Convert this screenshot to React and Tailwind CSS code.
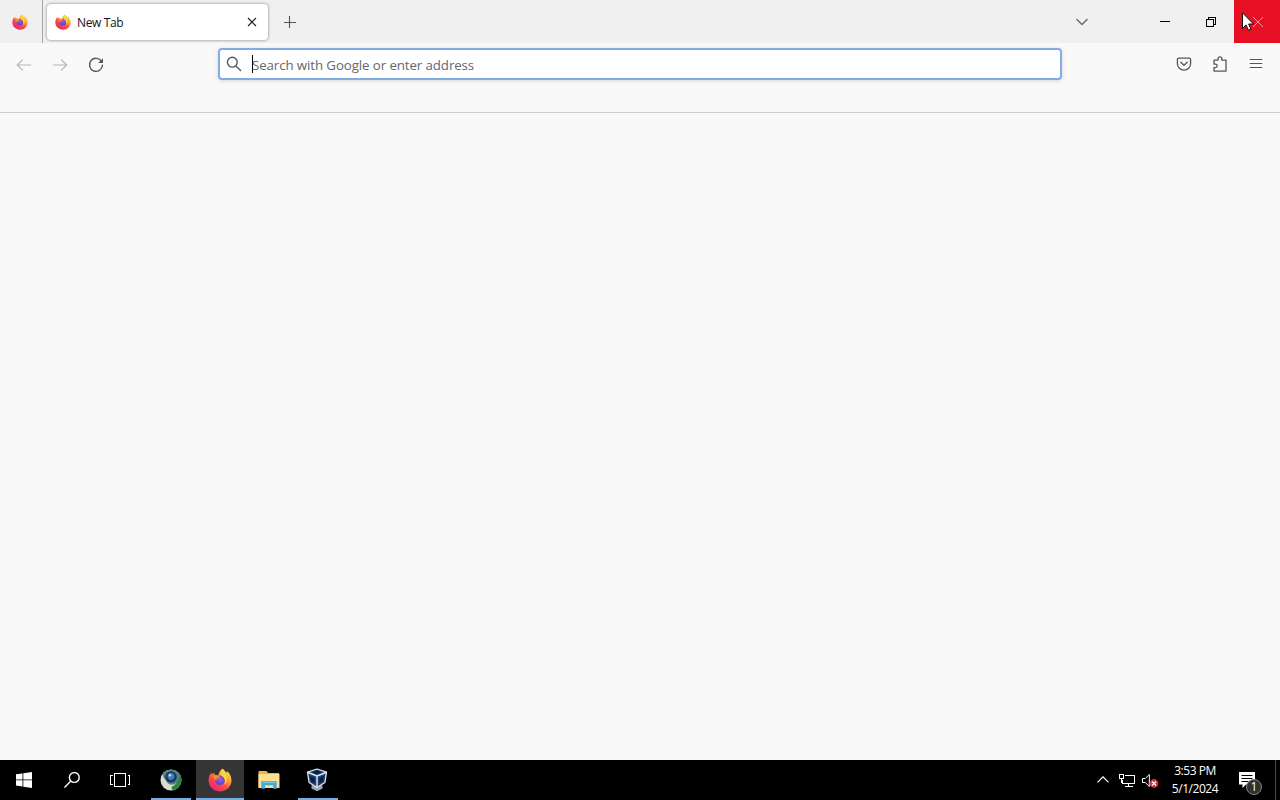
import { useId } from "react";

function FirefoxIcon({ className }) {
  const id = useId();
  return (
    <svg viewBox="0 0 24 24" className={className}>
      <defs>
        <linearGradient id={`${id}-body`} x1="0.85" y1="0.05" x2="0.25" y2="0.95">
          <stop offset="0" stopColor="#ffe64a" />
          <stop offset="0.35" stopColor="#ffa42c" />
          <stop offset="0.65" stopColor="#fb4b45" />
          <stop offset="1" stopColor="#e5237c" />
        </linearGradient>
        <radialGradient id={`${id}-globe`} cx="0.5" cy="0.35" r="0.65">
          <stop offset="0" stopColor="#a45cf0" />
          <stop offset="1" stopColor="#5b3fc4" />
        </radialGradient>
      </defs>
      <path
        fill={`url(#${id}-body)`}
        d="M14.5.7c2 1.2 3.1 2.9 3.6 4.4.6-.5.8-1.2.8-2C21.600 5.200 23.500 8.600 23.500 12.600 23.500 18.600 18.500 23.500 12 23.500S.5 18.700.5 12.500C.5 9.300 1.600 6.600 3.300 4.500l.6 2.300C4.700 5.900 5.300 5.300 6.200 4.800c0 1 .3 1.700.9 2.300 1.300-.1 2.300.1 3.100.6C10.800 4.900 12.200 2.300 14.500.7Z"
      />
      <circle cx="12" cy="12.300" r="4.800" fill={`url(#${id}-globe)`} />
      <path fill="#ff8a2a" d="M5.300 8.300c2-1.500 4.600-1.300 6.300.1-.2 1.400-1.500 1.700-2.600 2.200-.5.300-.6 1-.4 1.600-1.400 0-2.600-1.300-3.300-3.900Z" />
      <path fill="#ffd43b" d="M14.500.7c2.500 2.700 4.700 6 4.500 10.300 0 2.600-1.200 4.500-2.600 5.600 1.600-4.200.2-7.300-2.900-8.900C12.600 5.200 13 2.700 14.500.7Z" />
    </svg>
  );
}

function BackIcon({ className }) {
  return (
    <svg viewBox="0 0 16 16" className={className} fill="none" stroke="currentColor" strokeWidth="1.2" strokeLinecap="round" strokeLinejoin="round">
      <path d="M14.700 8H1.500M6.500 2.800 1.300 8l5.200 5.200" />
    </svg>
  );
}

function ReloadIcon({ className }) {
  return (
    <svg viewBox="0 0 16 16" className={className} fill="none" stroke="currentColor" strokeWidth="1.400" strokeLinecap="round">
      <path d="M13.600 4.500A6.500 6.500 0 1 0 14.500 8.300" />
      <path d="M15 1.300v4.800h-4.800Z" fill="currentColor" stroke="none" />
    </svg>
  );
}

function SearchIcon({ className }) {
  return (
    <svg viewBox="0 0 16 16" className={className} fill="none" stroke="currentColor" strokeWidth="1.400" strokeLinecap="round">
      <circle cx="6.300" cy="6.200" r="4.900" />
      <path d="m9.900 9.900 4.700 4.500" />
    </svg>
  );
}

function PocketIcon({ className }) {
  return (
    <svg viewBox="0 0 16 16" className={className} fill="none" stroke="currentColor" strokeWidth="1.300" strokeLinecap="round" strokeLinejoin="round">
      <path d="M2.700 2.200h10.600c.8 0 1.300.5 1.300 1.300v4.200a6.600 6.400 0 0 1-13.200 0V3.500c0-.8.5-1.300 1.300-1.300Z" />
      <path d="m4.800 6.300 3.200 3 3.200-3" />
    </svg>
  );
}

function ExtensionsIcon({ className }) {
  return (
    <svg viewBox="0 0 16 16" className={className} fill="none" stroke="currentColor" strokeWidth="1.300" strokeLinejoin="round">
      <path d="M2 4.200h4V2.700a1.900 1.900 0 0 1 3.800 0v1.500h4.200v10.900H2v-3.500h1.800a1.800 1.800 0 0 0 0-3.500H2Z" />
    </svg>
  );
}

function PointerIcon({ className }) {
  return (
    <svg viewBox="0 0 12 19" className={className}>
      <path d="M.5.8v15.500l3.600-3.400 2.300 5.300 2.500-1.100-2.300-5.100h4.900Z" fill="#fff" stroke="#111" strokeWidth="1" />
    </svg>
  );
}

function TabStrip() {
  return (
    <div className="flex h-[43px] bg-[#f0f0f0]">
      <div className="flex w-[43px] items-center border-r border-[#a5a5a5] pl-3">
        <FirefoxIcon className="size-4" />
      </div>
      <div className="ml-1 mt-1 flex h-9 w-[221px] items-center rounded-[4px] bg-white pl-2 pr-[11px] shadow-[0_0_3px_rgba(0,0,0,0.5)]">
        <FirefoxIcon className="size-4" />
        <span className="ml-[6px] mt-[2px] text-[12px] tracking-[-0.35px] text-[#15141a]">New Tab</span>
        <svg viewBox="0 0 10 10" className="ml-auto size-[10px]" stroke="#222" strokeWidth="1.200">
          <path d="m1 1 8 8M9 1 1 9" />
        </svg>
      </div>
      <svg viewBox="0 0 12 12" className="ml-4 mt-4 size-3" stroke="#555" strokeWidth="1.100">
        <path d="M5.500 0v12M0 6.500h12" />
      </svg>
      <div className="ml-auto flex">
        <svg viewBox="0 0 12 8" className="mr-[54px] mt-[18px] h-2 w-3" fill="none" stroke="#68686e" strokeWidth="1.400">
          <path d="m.5 1 5.500 5.500L11.500 1" />
        </svg>
        <div className="flex w-[46px] justify-center pt-[21px]">
          <div className="h-px w-[10px] bg-black" />
        </div>
        <div className="flex w-[46px] justify-center pt-[17px]">
          <svg viewBox="0 0 10 10" className="size-[10px]" fill="none" stroke="#000" shapeRendering="crispEdges">
            <path d="M.5 2.500h7v7h-7ZM2.500 2.500v-2h7v7h-2" />
          </svg>
        </div>
        <div className="relative flex w-[46px] justify-center bg-[#e60f23] pt-[17px]">
          <svg viewBox="0 0 10 10" className="ml-[2px] size-[10px]" stroke="#f6aab1" strokeWidth="0.900">
            <path d="m0 0 10 10M10 0 0 10" />
          </svg>
          <PointerIcon className="absolute left-2 top-[12px] h-[19px] w-3" />
        </div>
      </div>
    </div>
  );
}

function NavBar() {
  return (
    <div className="flex h-[69px] items-start bg-[#f9f9fa] text-[#55555c]">
      <div className="flex w-[218px] gap-5 pl-4 pt-[14px]">
        <BackIcon className="size-4 text-[#b5b5ba]" />
        <BackIcon className="size-4 rotate-180 text-[#b5b5ba]" />
        <ReloadIcon className="size-4" />
      </div>
      <div className="mt-[5px] flex h-8 w-[844px] items-center rounded-[4px] border-2 border-[#84abe8] bg-white pl-[6px] shadow-[0_1px_4px_rgba(0,0,0,0.14)]">
        <SearchIcon className="size-4" />
        <div className="ml-[10px] h-[18px] w-px bg-black" />
        <span className="-ml-px mt-[3px] whitespace-nowrap text-[13.300px] tracking-[-0.1px] text-[#66666c]">
          Search with Google or enter address
        </span>
      </div>
      <div className="ml-auto flex gap-5 pr-4 pt-[13px]">
        <PocketIcon className="size-4" />
        <ExtensionsIcon className="size-4" />
        <svg viewBox="0 0 16 16" className="size-4" stroke="currentColor" strokeWidth="1.200" strokeLinecap="round">
          <path d="M2.200 3.500h11.600M2.200 7.500h11.600M2.200 11.500h11.600" />
        </svg>
      </div>
    </div>
  );
}

function TaskButton({ active, running, children }) {
  return (
    <div className={`flex h-10 w-12 flex-col items-center ${active ? "bg-[#353535]" : ""}`}>
      <div className="flex h-[38px] items-center pt-[2px]">{children}</div>
      {running && <div className={`h-[2px] bg-[#76aee5] ${active ? "w-12" : "w-10"}`} />}
    </div>
  );
}

function GlobeIcon() {
  return (
    <svg viewBox="0 0 24 24" className="size-6">
      <circle cx="12" cy="12" r="10.500" fill="#d9dccf" />
      <path d="M14 1.700a10.500 10.500 0 0 1 2 20c-2.500 1-4.200-.7-3-3.200 3.500-1.500 5.500-4 5-8-.3-3.500-2-6-4-8.800Z" fill="#25883f" />
      <path d="M3.500 6C7 1.500 14 .2 18.500 4c3.500 3 1.500 10-3 12.300-4 1.500-7.500-.8-8.800-4.300C5 10.500 3.700 9 3.500 6Z" fill="#597f8b" />
      <circle cx="12" cy="9" r="5.800" fill="#173a65" />
      <circle cx="12" cy="8.500" r="3.400" fill="#3f7db8" />
      <circle cx="11" cy="7.300" r="1.300" fill="#b9daf1" />
    </svg>
  );
}

function FolderIcon() {
  return (
    <svg viewBox="0 0 24 24" className="size-6">
      <path d="M1.500 3h8l1.500 2h11v15H1.500Z" fill="#e8b750" />
      <path d="M1.500 6h21v14h-21Z" fill="#fbe08f" />
      <path d="M5.500 13h13c.8 0 1.200.4 1.200 1.200v6.500h-3.500v-3.500H8v3.500H4.300v-6.500c0-.8.4-1.200 1.200-1.200Z" fill="#43a9d8" />
      <path d="M6 14.200h12.300" stroke="#8dd4ee" />
    </svg>
  );
}

function VirtualBoxIcon() {
  return (
    <svg viewBox="0 0 24 24" className="size-6" strokeLinejoin="round">
      <path d="m6.500 17.500 5.500-1 5.500 1v3L12 23.200l-5.500-2.700Z" fill="#9ba6b6" />
      <path d="M2.500 4.200 12 1l9.500 3.200-1.600 10.300-7.900 5-7.900-5Z" fill="#1f3e70" stroke="#dbe5f2" strokeWidth="1.300" />
      <path d="M2.500 4.200 12 8l9.500-3.800M12 8v11.500" fill="none" stroke="#dbe5f2" strokeWidth="1.500" />
      <path d="m7 4.300 5-1.700 5 1.700-5 2Z" fill="#0c1d3c" />
      <path d="m5 8 4.500 2v5.200L6 13ZM19 8l-4.500 2v5.200L18 13Z" fill="#0c1d3c" />
    </svg>
  );
}

function Tray() {
  return (
    <div className="ml-auto flex text-white">
      <svg viewBox="0 0 12 7" className="mt-[16px] h-[7px] w-3" fill="none" stroke="currentColor" strokeWidth="1.200">
        <path d="m.5 6.300 5.500-5.500 5.500 5.500" />
      </svg>
      <svg viewBox="0 0 17 14" className="ml-[10px] mt-[14px] h-[14px] w-[17px]" fill="none" stroke="currentColor" shapeRendering="crispEdges">
        <path d="M5.500 1.500h10v8h-12v-4M9.500 9.500v3M5.500 12.500h8M.5.500h4v4h-4ZM2.500 4.500v4" />
      </svg>
      <svg viewBox="0 0 17 16" className="ml-[6px] mt-[13px] h-4 w-[17px]">
        <path d="M.5 5.500h2.800l4-4v12l-4-4H.5Z" fill="none" stroke="#fff" />
        <circle cx="12" cy="10.500" r="4.400" fill="#d92d36" />
        <path d="m10 8.500 4 4m0-4-4 4" stroke="#fff" strokeWidth="1.300" />
      </svg>
      <div className="ml-[6px] flex w-[60px] flex-col items-center pt-[2px] text-[12px] leading-[18px] tracking-[-0.45px]">
        <span>3:53 PM</span>
        <span>5/1/2024</span>
      </div>
      <div className="relative ml-[13px] w-[37px]">
        <svg viewBox="0 0 18 18" className="mt-[11px] size-[18px]">
          <path d="M1 1h16v12.500H8L4.500 17v-3.500H1Z" fill="#fff" />
          <path d="M3.500 4.500h11M3.500 7.500h11M3.500 10.500h7" stroke="#000" strokeWidth="1.100" />
        </svg>
        <span className="absolute left-2 top-[19px] flex size-4 items-center justify-center rounded-full border border-[#858585] bg-[#303030] text-[12px] leading-none">
          1
        </span>
      </div>
      <div className="mr-1 h-10 w-px bg-[#484848]" />
    </div>
  );
}

function Taskbar() {
  return (
    <div className="flex h-10 bg-black">
      <TaskButton>
        <svg viewBox="0 0 16 16" className="size-4" fill="#fff">
          <path d="m0 2.300 6.500-.9v6.100H0ZM7.300 1.300 16 0v7.500H7.300ZM0 8.300h6.500v6.200L0 13.600ZM7.300 8.300H16V16l-8.700-1.300Z" />
        </svg>
      </TaskButton>
      <TaskButton>
        <svg viewBox="0 0 16 16" className="size-4" fill="none" stroke="#fff" strokeWidth="1.400">
          <circle cx="10.300" cy="5.500" r="4.900" />
          <path d="M6.800 9 .5 15.500" />
        </svg>
      </TaskButton>
      <TaskButton>
        <svg viewBox="0 0 20 16" className="h-4 w-5" fill="none" stroke="#fff" shapeRendering="crispEdges">
          <path d="M4.500 1.500h11v13h-11ZM2.500 3.500h-2v9h2M17.500 3.500h2v9h-2" />
        </svg>
      </TaskButton>
      <div className="ml-[3px] flex gap-px">
        <TaskButton running>
          <GlobeIcon />
        </TaskButton>
        <TaskButton active running>
          <FirefoxIcon className="size-6" />
        </TaskButton>
        <TaskButton>
          <FolderIcon />
        </TaskButton>
        <TaskButton running>
          <div className="mr-[3px]">
            <VirtualBoxIcon />
          </div>
        </TaskButton>
      </div>
      <Tray />
    </div>
  );
}

export default function App() {
  return (
    <div className="flex h-[800px] w-[1280px] flex-col overflow-hidden bg-[#f9f9fa] font-['Open_Sans','Noto_Sans',sans-serif]">
      <TabStrip />
      <NavBar />
      <div className="flex-1 border-t border-[#cccccf] bg-[#f9f9f9]" />
      <Taskbar />
    </div>
  );
}
